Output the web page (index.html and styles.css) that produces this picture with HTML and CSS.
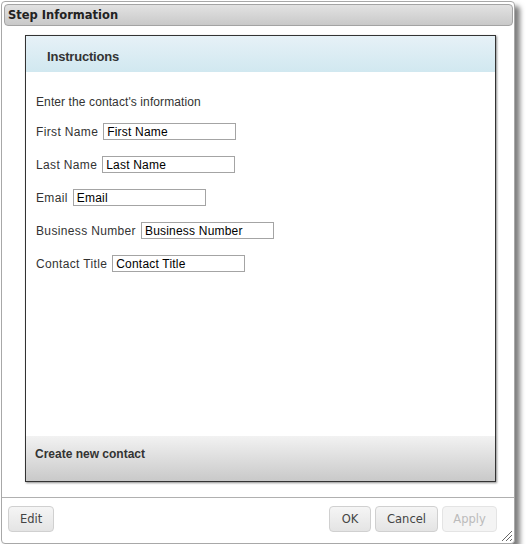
FILE: index.html
```html
<!DOCTYPE html>
<html>
<head>
<meta charset="utf-8">
<link rel="stylesheet" href="styles.css">
</head>
<body>
<div class="dialog">
  <div class="titlebar">Step Information</div>
  <div class="panel">
    <div class="panel-header">Instructions</div>
    <div class="panel-body">
      <div class="intro">Enter the contact's information</div>
      <div class="row"><span class="label">First Name</span><input class="field" type="text" value="First Name"></div>
      <div class="row"><span class="label">Last Name</span><input class="field" type="text" value="Last Name"></div>
      <div class="row"><span class="label">Email</span><input class="field" type="text" value="Email"></div>
      <div class="row"><span class="label">Business Number</span><input class="field" type="text" value="Business Number"></div>
      <div class="row"><span class="label">Contact Title</span><input class="field" type="text" value="Contact Title"></div>
    </div>
    <div class="panel-footer">Create new contact</div>
  </div>
  <div class="divider"></div>
  <div class="buttons">
    <button class="btn">Edit</button>
    <div class="spacer"></div>
    <button class="btn btn-ok">OK</button>
    <button class="btn">Cancel</button>
    <button class="btn btn-disabled">Apply</button>
  </div>
  <svg class="grip" width="12" height="12" viewBox="0 0 12 12">
    <line x1="11" y1="1" x2="1" y2="11" stroke="#666" stroke-width="1"/>
    <line x1="11" y1="5" x2="5" y2="11" stroke="#666" stroke-width="1"/>
    <line x1="11" y1="9" x2="9" y2="11" stroke="#666" stroke-width="1"/>
  </svg>
</div>
</body>
</html>
```

FILE: styles.css
```css
html, body {
  margin: 0;
  padding: 0;
  background: #fff;
}
body {
  font-family: "Liberation Sans", Arial, sans-serif;
}
.dialog {
  position: relative;
  box-sizing: border-box;
  margin: 1px 0 0 1px;
  width: 514px;
  height: 543px;
  border: 1px solid #a8a8a8;
  border-radius: 4px;
  background: #fff;
  box-shadow: 5px 5px 5px rgba(0,0,0,0.5);
  display: flex;
  flex-direction: column;
}
.titlebar {
  box-sizing: border-box;
  margin: 2px 1px 0 2px;
  height: 22px;
  border: 1px solid #a4a4a4;
  border-radius: 4px;
  background: linear-gradient(#e2e2e2, #c9c9c9);
  font-family: "DejaVu Sans", Verdana, sans-serif;
  font-weight: bold;
  font-size: 11.5px;
  color: #222;
  line-height: 20px;
  padding-left: 3px;
}
.panel {
  box-sizing: border-box;
  margin: 9px 0 0 23px;
  width: 471px;
  height: 447px;
  border: 1px solid #333;
  box-shadow: 1px 1px 2px rgba(0,0,0,0.45);
  display: flex;
  flex-direction: column;
  background: #fff;
}
.panel-header {
  height: 36px;
  background: linear-gradient(#e6f1f7, #d1e8f0);
  font-weight: bold;
  font-size: 13px;
  letter-spacing: -0.2px;
  color: #333;
  line-height: 41px;
  padding-left: 21px;
}
.panel-body {
  flex: 1;
  padding: 22px 10px 0 10px;
  font-size: 12px;
  color: #333;
}
.intro {
  height: 17px;
  line-height: 17px;
  letter-spacing: 0.1px;
}
.row {
  display: flex;
  align-items: baseline;
  height: 17px;
  margin-top: 16px;
}
.intro + .row {
  margin-top: 12px;
}
.label {
  margin-right: 5px;
  letter-spacing: 0.35px;
}
.field {
  box-sizing: border-box;
  width: 133px;
  height: 17px;
  margin: 0;
  border: 1px solid #a4a4a4;
  padding: 0 0 0 3px;
  font-family: "Liberation Sans", Arial, sans-serif;
  font-size: 12px;
  letter-spacing: 0.2px;
  color: #000;
  background: #fff;
  outline: none;
}
.panel-footer {
  height: 45px;
  box-sizing: border-box;
  background: linear-gradient(#f2f2f2, #c9c9c9);
  font-weight: bold;
  font-size: 12px;
  color: #333;
  padding: 11px 0 0 9px;
  line-height: 15px;
}
.divider {
  margin-top: 15px;
  height: 1px;
  background: #b0b0b0;
}
.buttons {
  display: flex;
  align-items: center;
  padding: 8px 0 0 6px;
}
.spacer {
  flex: 1;
}
.btn {
  box-sizing: border-box;
  height: 26px;
  margin: 0;
  padding: 0 11px;
  border: 1px solid #d0d0d0;
  border-radius: 4px;
  background: linear-gradient(#f5f5f5, #e4e4e4);
  font-family: "DejaVu Sans", Verdana, sans-serif;
  font-size: 11.5px;
  color: #444;
}
.btn + .btn {
  margin-left: 4px;
}
.btn-ok {
  width: 42px;
  padding: 0;
}
.btn-disabled {
  width: 55px;
  padding: 0;
  margin-right: 17px;
  color: #bbb;
  border-color: #e4e4e4;
  background: #f4f4f4;
}
.grip {
  position: absolute;
  right: 1px;
  bottom: 1px;
}
```
